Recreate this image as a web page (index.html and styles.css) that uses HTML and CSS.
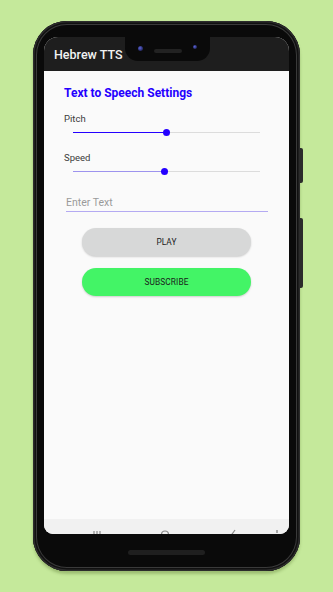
FILE: index.html
```html
<!DOCTYPE html>
<html>
<head>
<meta charset="utf-8">
<link rel="stylesheet" href="styles.css">
</head>
<body>
<div class="phone">
  <div class="btn-side btn-power"></div>
  <div class="btn-side btn-volume"></div>
  <div class="screen">
    <div class="notch">
      <span class="cam cam-left"></span>
      <span class="speaker"></span>
      <span class="cam cam-right"></span>
    </div>
    <div class="appbar">Hebrew TTS</div>
    <div class="content">
      <div class="title">Text to Speech Settings</div>
      <div class="label label-first">Pitch</div>
      <div class="slider">
        <div class="track"><div class="active" style="width:50%"></div></div>
        <div class="thumb" style="left:50%"></div>
      </div>
      <div class="label">Speed</div>
      <div class="slider slider-soft">
        <div class="track"><div class="active" style="width:49%"></div></div>
        <div class="thumb" style="left:49%"></div>
      </div>
      <div class="field">Enter Text</div>
      <div class="buttons">
        <div class="btn btn-play">PLAY</div>
        <div class="btn btn-sub">SUBSCRIBE</div>
      </div>
    </div>
    <div class="navbar">
      <svg class="nav-ico" width="10" height="10" viewBox="0 0 10 10"><path d="M2 2v8M5 2v8M8 2v8" stroke="#8a8a8a" stroke-width="1.2" fill="none"/></svg>
      <svg class="nav-ico" width="10" height="10" viewBox="0 0 10 10"><rect x="1.5" y="2" width="7" height="9" rx="3.5" stroke="#8a8a8a" stroke-width="1.2" fill="none"/></svg>
      <svg class="nav-ico" width="10" height="10" viewBox="0 0 10 10"><path d="M7 1L2 8" stroke="#8a8a8a" stroke-width="1.2" fill="none"/></svg>
      <svg class="nav-ico nav-last" width="10" height="10" viewBox="0 0 10 10"><path d="M5 1v3M2 6h6" stroke="#8a8a8a" stroke-width="1.4" fill="none"/></svg>
    </div>
  </div>
  <div class="chin"><span class="chin-bar"></span></div>
</div>
</body>
</html>
```
FILE: styles.css
```css
html, body {
  margin: 0;
  padding: 0;
}
body {
  width: 333px;
  height: 592px;
  background: #c5e99b;
  font-family: Roboto, "Noto Sans", Arial, sans-serif;
  overflow: hidden;
}
.phone {
  position: relative;
  margin: 21px 0 0 33px;
  width: 267px;
  height: 550px;
  box-sizing: border-box;
  padding: 16px 11px 0 11px;
  background: #0a0a0a;
  border-radius: 34px;
  box-shadow:
    inset 0 0 0 1.5px #2c2c2c,
    inset 0 0 0 3px #111,
    inset 0 0 0 4px #3a3a3a,
    0 3px 3px rgba(80, 110, 40, 0.35);
  display: flex;
  flex-direction: column;
}
.btn-side {
  position: absolute;
  right: -3px;
  width: 3px;
  background: #2b2b2b;
  border-radius: 0 2px 2px 0;
}
.btn-power { top: 127px; height: 35px; }
.btn-volume { top: 197px; height: 70px; }
.screen {
  position: relative;
  height: 497px;
  background: #fafafa;
  border-radius: 14px 14px 9px 9px;
  overflow: hidden;
  display: flex;
  flex-direction: column;
}
.notch {
  position: absolute;
  left: 81px;
  top: 0;
  width: 85px;
  height: 24px;
  background: #0a0a0a;
  border-radius: 0 0 13px 13px;
  display: flex;
  align-items: center;
  justify-content: space-between;
  padding: 0 13px 0 13px;
  box-sizing: border-box;
}
.cam {
  width: 5px;
  height: 5px;
  border-radius: 50%;
  background: radial-gradient(circle at 40% 40%, #5b64d8 0, #2a2f70 60%, #111 100%);
}
.cam-left { margin-top: -1px; }
.cam-right { margin-top: -4px; width: 4px; height: 4px; }
.speaker {
  width: 28px;
  height: 4px;
  border-radius: 2px;
  background: #222;
  margin-top: 4px;
}
.appbar {
  height: 34px;
  flex: none;
  background: #1e1e1e;
  color: #f2f2f2;
  font-size: 12.5px;
  font-weight: 500;
  line-height: 36px;
  padding-left: 10px;
}
.content {
  flex: 1;
  display: flex;
  flex-direction: column;
  padding-left: 20px;
  padding-right: 21px;
}
.title {
  margin-top: 13.5px;
  height: 16px;
  line-height: 16px;
  font-size: 12px;
  font-weight: 700;
  color: #2400ff;
}
.label {
  margin-top: 15px;
  height: 12px;
  line-height: 12px;
  font-size: 9.5px;
  color: #3a3a3a;
}
.label-first { margin-top: 12px; }
.slider {
  position: relative;
  margin: 4px 0 0 9px;
  width: 187px;
  height: 8px;
  display: flex;
  align-items: center;
}
.track {
  width: 100%;
  height: 1.5px;
  background: #dcdcdc;
}
.active {
  height: 100%;
  background: #2400ff;
}
.slider-soft .active { background: #9d93ee; }
.thumb {
  position: absolute;
  top: 0.5px;
  width: 7px;
  height: 7px;
  margin-left: -3.5px;
  border-radius: 50%;
  background: #2400ff;
}
.field {
  margin: 20.5px 0 0 2px;
  height: 14px;
  line-height: 14px;
  font-size: 10.5px;
  color: #9a9a9a;
  padding-left: 0;
  padding-bottom: 1px;
  border-bottom: 1.5px solid #b4aaf2;
}
.buttons {
  display: flex;
  flex-direction: column;
  gap: 12.4px;
  margin: 16px 0 0 18px;
  width: 169px;
}
.btn {
  height: 28px;
  border-radius: 14px;
  display: flex;
  align-items: center;
  justify-content: center;
  font-size: 8.3px;
  font-weight: 400;
  color: #1a1a1a;
  letter-spacing: 0.1px;
  box-shadow: 0 1px 2px rgba(0, 0, 0, 0.18);
}
.btn-play { background: #d7d8d8; }
.btn-sub { background: #43f466; }
.navbar {
  height: 15px;
  flex: none;
  background: #f1f1f1;
  display: flex;
  align-items: flex-start;
  padding: 10px 0 0 48px;
  box-sizing: border-box;
  gap: 58px;
}
.nav-ico { flex: none; }
.nav-last { margin-left: -24px; }
.chin {
  flex: 1;
  display: flex;
  justify-content: center;
  padding-top: 16px;
  box-sizing: border-box;
}
.chin-bar {
  width: 77px;
  height: 5px;
  border-radius: 3px;
  background: #1f1f1f;
}
```
